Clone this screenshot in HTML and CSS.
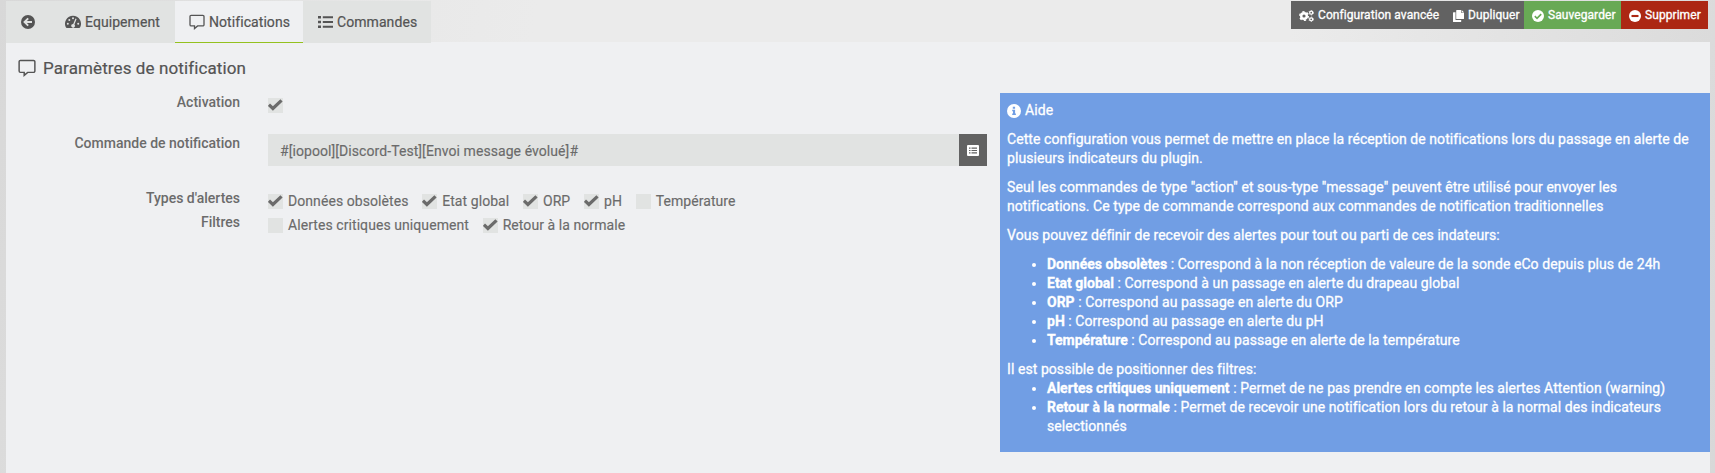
FILE: index.html
```html
<!DOCTYPE html>
<html lang="fr">
<head>
<meta charset="utf-8">
<title>Paramètres de notification</title>
<link rel="stylesheet" href="styles.css">
</head>
<body>
<svg class="defs" width="0" height="0">
  <symbol id="check" viewBox="0 0 15 15"><path d="M.9 6.700 4.900 10.500 13.500 2.300" fill="none" stroke="currentColor" stroke-width="3.200"/></symbol>
  <symbol id="comment" viewBox="0 0 16 16"><path d="M2.200 1.300h11.600a1.200 1.200 0 0 1 1.200 1.200v8.200a1.200 1.200 0 0 1-1.200 1.200H8.600l-3.100 2.700v-2.700H2.200A1.200 1.200 0 0 1 1 10.700V2.500a1.200 1.200 0 0 1 1.200-1.200z" fill="none" stroke="currentColor" stroke-width="1.300"/></symbol>
</svg>
<header class="topbar">
  <nav class="tabs">
    <a class="tab tab-back"><svg width="14" height="14" viewBox="0 0 14 14"><circle cx="7" cy="7" r="7" fill="currentColor"/><path d="M11 7H4M7.200 3.300 3.500 7l3.700 3.700" fill="none" stroke="#e1e3e2" stroke-width="1.900"/></svg></a>
    <a class="tab tab-equip"><svg width="16" height="14" viewBox="0 0 16 14"><path d="M8 .7a8 8 0 0 0-7 11.900c.2.300.4.400.7.400h12.600c.3 0 .5-.1.700-.4A8 8 0 0 0 8 .7z" fill="currentColor"/><g fill="#e1e3e2"><circle cx="2.800" cy="8.700" r="1"/><circle cx="4.300" cy="5" r="1"/><circle cx="8" cy="3.300" r="1"/><circle cx="13.200" cy="8.700" r="1"/><path d="m10.500 3.500 1.100.4-2.200 5.500a1.900 1.900 0 1 1-1.200-.5z"/></g></svg>Equipement</a>
    <a class="tab tab-active"><svg width="16" height="16"><use href="#comment"/></svg>Notifications</a>
    <a class="tab tab-cmd"><svg width="15" height="14" viewBox="0 0 15 14"><path d="M0 1h3v2.500H0zM0 5.800h3v2.500H0zM0 10.500h3V13H0zM4.800 1.300H15v1.900H4.800zM4.800 6.100H15V8H4.800zM4.800 10.800H15v1.900H4.800z" fill="currentColor"/></svg>Commandes</a>
  </nav>
  <div class="actions">
    <a class="btn btn-config"><svg width="15" height="12" viewBox="0 0 15 12"><g fill="none" stroke="currentColor"><circle cx="5" cy="6" r="2.800" stroke-width="2.400"/><circle cx="5" cy="6" r="4.300" stroke-width="1.400" stroke-dasharray="2.250"/><circle cx="12.200" cy="2.700" r="1.500" stroke-width="1.300"/><circle cx="12.200" cy="9.300" r="1.500" stroke-width="1.300"/><circle cx="12.200" cy="2.700" r="2.300" stroke-width=".7" stroke-dasharray="1.200"/><circle cx="12.200" cy="9.300" r="2.300" stroke-width=".7" stroke-dasharray="1.200"/></g></svg>Configuration avancée</a>
    <a class="btn btn-dup"><svg width="11" height="12" viewBox="0 0 11 12"><path d="M3.800 0H8v2.800h3v5.700a.6.600 0 0 1-.6.600H3.800a.6.600 0 0 1-.6-.6V.6a.6.600 0 0 1 .6-.6zM8.600 0 11 2.300H8.600zM0 2.800a.6.600 0 0 1 .6-.6h1.900v7.700h5.700v1.500a.6.600 0 0 1-.6.600h-7a.6.600 0 0 1-.6-.6z" fill="currentColor"/></svg>Dupliquer</a>
    <a class="btn btn-save"><svg width="12" height="12" viewBox="0 0 12 12"><circle cx="6" cy="6" r="6" fill="currentColor"/><path d="m2.800 6.200 2.200 2.100 4.200-4.200" fill="none" stroke="#68a955" stroke-width="1.600"/></svg>Sauvegarder</a>
    <a class="btn btn-del"><svg width="12" height="12" viewBox="0 0 12 12"><circle cx="6" cy="6" r="6" fill="currentColor"/><path d="M2.500 6h7" stroke="#ac2713" stroke-width="2.100"/></svg>Supprimer</a>
  </div>
</header>
<main class="panel">
  <h1 class="title"><svg width="18" height="18"><use href="#comment"/></svg>Paramètres de notification</h1>
  <div class="columns">
    <form class="form">
      <div class="row row-activation"><label class="name">Activation</label><div class="options"><span class="box"><svg width="15" height="15"><use href="#check"/></svg></span></div></div>
      <div class="row row-command"><label class="name">Commande de notification</label><div class="command"><span class="input">#[iopool][Discord-Test][Envoi message évolué]#</span><span class="pick"><svg width="12" height="11" viewBox="0 0 12 11"><rect width="12" height="11" rx="1" fill="currentColor"/><path d="M2 3.200h1.500M2 5.500h1.500M2 7.800h1.500M4.500 3.200H10M4.500 5.500H10M4.500 7.800H10" stroke="#626262" stroke-width="1.200"/></svg></span></div></div>
      <div class="row row-types"><label class="name">Types d'alertes</label><div class="options">
        <label class="option"><span class="box"><svg width="15" height="15"><use href="#check"/></svg></span>Données obsolètes</label>
        <label class="option"><span class="box"><svg width="15" height="15"><use href="#check"/></svg></span>Etat global</label>
        <label class="option"><span class="box"><svg width="15" height="15"><use href="#check"/></svg></span>ORP</label>
        <label class="option"><span class="box"><svg width="15" height="15"><use href="#check"/></svg></span>pH</label>
        <label class="option"><span class="box"></span>Température</label></div></div>
      <div class="row row-filters"><label class="name">Filtres</label><div class="options">
        <label class="option"><span class="box"></span>Alertes critiques uniquement</label>
        <label class="option"><span class="box"><svg width="15" height="15"><use href="#check"/></svg></span>Retour à la normale</label></div></div>
    </form>
    <aside class="help">
      <p class="help-title"><svg width="14" height="14" viewBox="0 0 14 14"><circle cx="7" cy="7" r="7" fill="currentColor"/><path d="M5.800 2.700h2.300v2.100H5.800zM5.200 5.800h2.900v3.700h.8v1.400H5.200V9.500H6V7.200h-.8z" fill="#719ee4"/></svg>Aide</p>
      <p>Cette configuration vous permet de mettre en place la réception de notifications lors du passage en alerte de<br>plusieurs indicateurs du plugin.</p>
      <p>Seul les commandes de type "action" et sous-type "message" peuvent être utilisé pour envoyer les<br>notifications. Ce type de commande correspond aux commandes de notification traditionnelles</p>
      <p>Vous pouvez définir de recevoir des alertes pour tout ou parti de ces indateurs:</p>
      <ul>
        <li><b>Données obsolètes</b> : Correspond à la non réception de valeure de la sonde eCo depuis plus de 24h</li>
        <li><b>Etat global</b> : Correspond à un passage en alerte du drapeau global</li>
        <li><b>ORP</b> : Correspond au passage en alerte du ORP</li>
        <li><b>pH</b> : Correspond au passage en alerte du pH</li>
        <li><b>Température</b> : Correspond au passage en alerte de la température</li>
      </ul>
      <div>Il est possible de positionner des filtres:</div>
      <ul>
        <li><b>Alertes critiques uniquement</b> : Permet de ne pas prendre en compte les alertes Attention (warning)</li>
        <li><b>Retour à la normale</b> : Permet de recevoir une notification lors du retour à la normal des indicateurs<br>selectionnés</li>
      </ul>
    </aside>
  </div>
</main>
</body>
</html>
```
FILE: styles.css
```css
* { box-sizing: border-box; }
body {
  margin: 0;
  height: 473px;
  overflow: hidden;
  padding: 1px 5px 0 6px;
  background: linear-gradient(100deg, #d8d8d8 0%, #e9e9e9 24%, #ebebeb 30%, #ebebeb 72%, #d8d8d8 100%);
  font: 14px/19px Roboto, sans-serif;
  letter-spacing: .07px;
  color: #6b6b6b;
  white-space: nowrap;
}
svg { flex: none; display: block; }
.defs { position: absolute; }
.topbar { display: flex; justify-content: space-between; height: 41px; }
.tabs { display: flex; height: 42px; position: relative; }
.tab { display: flex; align-items: center; gap: 4px; background: #e1e3e2; color: #545454; -webkit-text-stroke: .2px; }
.tab-back { width: 43px; padding-left: 15px; }
.tab-equip { width: 126px; padding-left: 16px; }
.tab-active { width: 128px; padding: 1px 0 0 14px; background: #eff0f2; border-bottom: 1px solid #94c11f; }
.tab-cmd { width: 128px; padding-left: 15px; }
.actions { display: flex; padding-right: 2px; }
.btn { display: flex; align-items: center; gap: 4px; height: 28px; padding-top: 1px; font-size: 12px; color: #fff; background: #626262; -webkit-text-stroke: .3px; }
.btn-config { width: 153px; padding-left: 8px; }
.btn-dup { width: 80px; padding-left: 9px; }
.btn-save { width: 97px; padding-left: 8px; background: #68a955; }
.btn-del { width: 87px; padding-left: 8px; background: #ac2713; }
.panel { height: 431px; background: #eff0f2; }
.title { margin: 0; height: 51px; padding: 1px 0 0 12px; display: flex; align-items: center; gap: 7px; font-size: 17px; font-weight: 400; letter-spacing: .11px; color: #545454; -webkit-text-stroke: .2px; }
.columns { display: flex; justify-content: space-between; align-items: flex-start; }
.form { width: 981px; }
.row { display: flex; }
.row-activation { height: 41px; }
.row-command { height: 55px; }
.row-types { height: 24px; }
.name { width: 234px; margin-right: 28px; text-align: right; font-weight: 500; letter-spacing: 0; }
.options { display: flex; gap: 13.7px; height: 23px; align-items: center; }
.row-activation .options { height: 25px; }
.row-types .options, .row-filters .options { padding-top: 1px; }
.option { display: flex; align-items: center; gap: 5px; -webkit-text-stroke: .15px; }
.box { width: 15px; height: 15px; background: #e1e3e2; }
.command { display: flex; height: 32px; width: 719px; }
.input { flex: 1; padding-left: 12px; line-height: 34px; background: #e1e3e2; -webkit-text-stroke: .15px; }
.pick { width: 28px; display: flex; align-items: center; justify-content: center; background: #626262; color: #fff; }
.help { width: 710px; height: 359px; padding: 8px 7px; background: #719ee4; color: #fff; -webkit-text-stroke: .3px; }
.help p { margin: 0 0 10px; }
.help-title { display: flex; align-items: center; gap: 4px; }
.help ul { margin: 0 0 10px; padding-left: 40px; }
.help b { letter-spacing: 0; }
```
